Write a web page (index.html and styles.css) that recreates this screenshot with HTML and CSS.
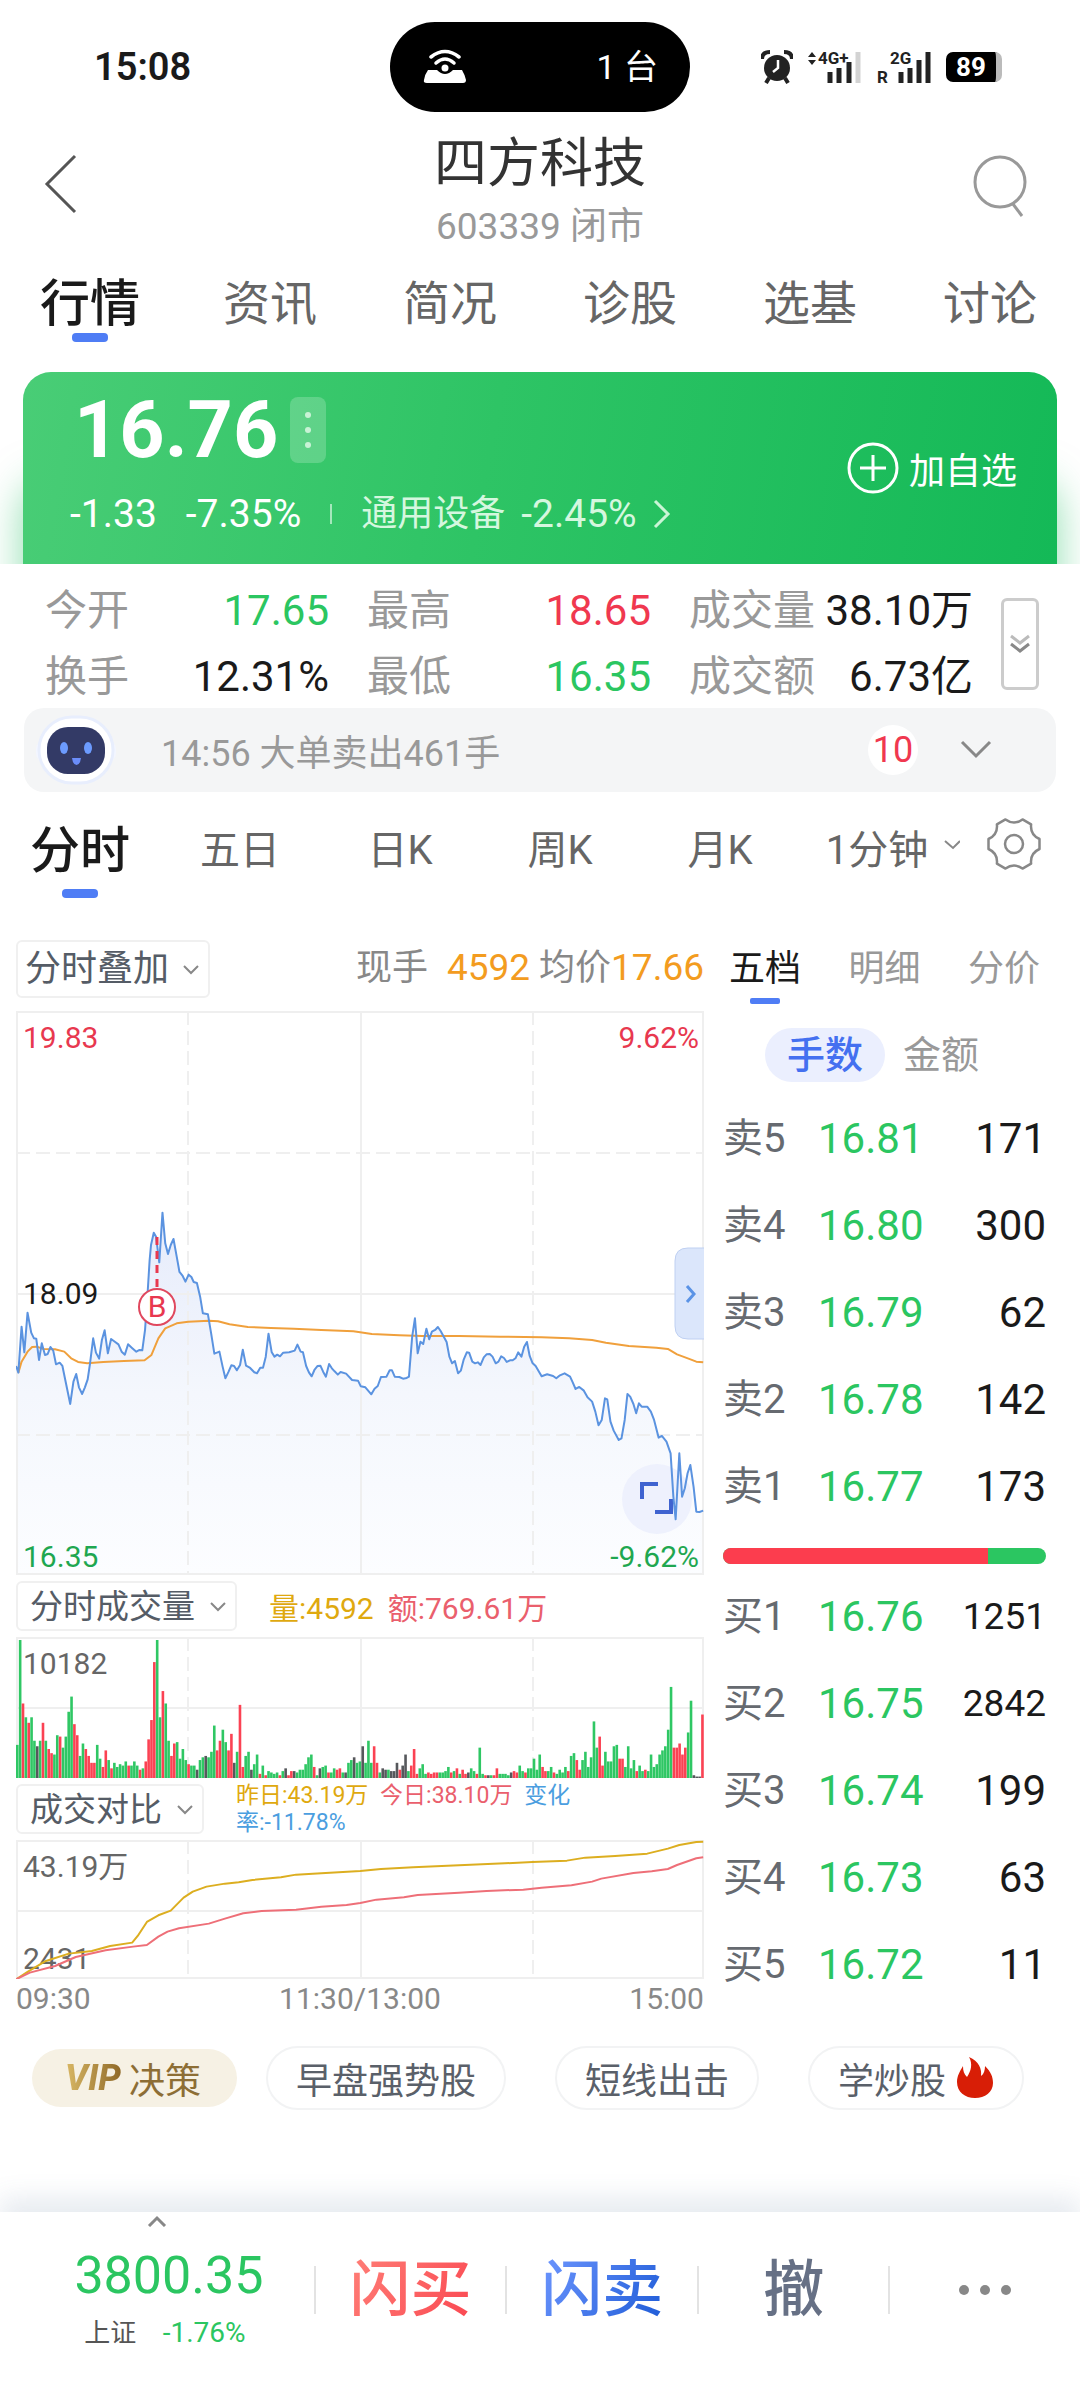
FILE: index.html
```html
<!DOCTYPE html>
<html lang="zh-CN">
<head>
  <meta charset="UTF-8">
  <meta name="viewport" content="width=device-width, initial-scale=1.0">
  <title>四方科技 603339</title>
  <link rel="stylesheet" href="styles.css">
</head>
<body>

  <!-- Phone status bar -->
  <div class="status-bar">
    <span class="clock">15:08</span>
    <div class="island">
      <svg width="46" height="36" viewBox="0 0 46 36">
        <path d="M9 8Q23-3 37 8" fill="none" stroke="#fff" stroke-width="3.5" stroke-linecap="round"/>
        <path d="M14 14Q23 6 32 14" fill="none" stroke="#fff" stroke-width="3.5" stroke-linecap="round"/>
        <path d="M6 21H15Q23 29 31 21H40Q43 26 44 31Q44 34 41 34H5Q1 34 2 31Q3 25 6 21Z" fill="#fff"/>
        <circle cx="23" cy="19" r="3.5" fill="#fff"/>
      </svg>
      <span>1 台</span>
    </div>
    <div class="indicators">
      <svg width="32" height="34" viewBox="0 0 32 34">
        <circle cx="16" cy="18" r="13" fill="#222"/>
        <path d="M1 9Q1 2 9 2M31 9Q31 2 23 2" fill="none" stroke="#222" stroke-width="4"/>
        <path d="M8 28L5 33M24 28L27 33" stroke="#222" stroke-width="4"/>
        <path d="M17 10V18L12 22" fill="none" stroke="#fff" stroke-width="2.5"/>
      </svg>
      <svg class="signal" width="54" height="34" viewBox="0 0 54 34">
        <path d="M0 7L4 2L8 7ZM0 10L4 15L8 10Z" fill="#222"/>
        <text x="10" y="14">4G+</text>
        <path d="M22 33V22M31 33V18M41 33V12" stroke="#222" stroke-width="5"/>
        <path d="M50 33V2" stroke="#d3d3d3" stroke-width="5"/>
      </svg>
      <svg class="signal" width="54" height="34" viewBox="0 0 54 34">
        <text x="0" y="33">R</text>
        <text x="13" y="14">2G</text>
        <path d="M24 33V22M33 33V18M42 33V10M51 33V2" stroke="#222" stroke-width="5"/>
      </svg>
      <span class="battery">89</span>
    </div>
  </div>

  <!-- Title bar -->
  <header class="title-bar">
    <button class="icon-button" aria-label="返回">
      <svg width="34" height="60" viewBox="0 0 34 60"><path d="M31 2L3 30L31 58" fill="none" stroke="#555" stroke-width="3"/></svg>
    </button>
    <div class="title">
      <h1>四方科技</h1>
      <p>603339 闭市</p>
    </div>
    <button class="icon-button" aria-label="搜索">
      <svg width="56" height="64" viewBox="0 0 56 64"><circle cx="28" cy="28" r="25" fill="none" stroke="#999" stroke-width="3"/><path d="M41 50L50 62" stroke="#999" stroke-width="3"/></svg>
    </button>
  </header>

  <nav class="main-tabs">
    <a href="#" class="active">行情</a>
    <a href="#">资讯</a>
    <a href="#">简况</a>
    <a href="#">诊股</a>
    <a href="#">选基</a>
    <a href="#">讨论</a>
  </nav>

  <!-- Price card -->
  <section class="price-wrap">
    <div class="price-card">
      <div class="quote">
        <div class="price-line">
          <span class="price">16.76</span>
          <button class="more-dots" aria-label="更多">
            <svg width="6" height="40" viewBox="0 0 6 40"><g fill="#c9f2d6"><circle cx="3" cy="5" r="3"/><circle cx="3" cy="20" r="3"/><circle cx="3" cy="35" r="3"/></g></svg>
          </button>
        </div>
        <div class="change-line">
          <span>-1.33</span>
          <span>-7.35%</span>
          <i class="separator"></i>
          <a href="#" class="industry">
            <span class="name">通用设备</span>
            <span>-2.45%</span>
            <svg width="18" height="30" viewBox="0 0 18 30"><path d="M2 2L15 15L2 28" fill="none" stroke="#c9f5d6" stroke-width="3"/></svg>
          </a>
        </div>
      </div>
      <button class="add-button">
        <svg width="52" height="52" viewBox="0 0 52 52"><g fill="none" stroke="#fff" stroke-width="3"><circle cx="26" cy="26" r="24"/><path d="M13 26H39M26 13V39"/></g></svg>
        加自选
      </button>
    </div>
  </section>

  <!-- Day stats -->
  <section class="stats">
    <dl>
      <div><dt>今开</dt><dd class="down">17.65</dd></div>
      <div><dt>最高</dt><dd class="up">18.65</dd></div>
      <div><dt>成交量</dt><dd>38.10万</dd></div>
      <div><dt>换手</dt><dd>12.31%</dd></div>
      <div><dt>最低</dt><dd class="down">16.35</dd></div>
      <div><dt>成交额</dt><dd>6.73亿</dd></div>
    </dl>
    <button class="expand-stats" aria-label="展开">
      <svg width="20" height="20" viewBox="0 0 20 20"><g fill="none" stroke-width="3"><path d="M1 2L10 9L19 2" stroke="#bbb"/><path d="M1 10L10 17L19 10" stroke="#888"/></g></svg>
    </button>
  </section>

  <section class="notice">
    <svg width="84" height="72" viewBox="0 0 84 72">
      <rect x="2" y="25" width="80" height="24" rx="10" fill="#f3f6ff"/>
      <rect x="5" y="3" width="74" height="66" rx="33" fill="#fff" stroke="#e8eefd" stroke-width="3"/>
      <rect x="13" y="13" width="58" height="47" rx="21" fill="#333a66"/>
      <ellipse cx="30" cy="34" rx="4" ry="6" fill="#6c9bff"/>
      <ellipse cx="54" cy="34" rx="4" ry="6" fill="#6c9bff"/>
      <path d="M38 44H47Q46 51 42.500 51Q39 51 38 44Z" fill="#6b8dfa"/>
    </svg>
    <span class="notice-text">14:56 大单卖出461手</span>
    <span class="count">10</span>
    <button class="icon-button" aria-label="展开消息">
      <svg width="32" height="20" viewBox="0 0 32 20"><path d="M2 2L16 16L30 2" fill="none" stroke="#888" stroke-width="3"/></svg>
    </button>
  </section>

  <!-- Chart period -->
  <nav class="period-tabs">
    <a href="#" class="active">分时</a>
    <a href="#">五日</a>
    <a href="#">日K</a>
    <a href="#">周K</a>
    <a href="#">月K</a>
    <a href="#" class="minutes">1分钟 <svg width="16" height="12" viewBox="0 0 16 12"><path d="M1 2L9 9L16 2" fill="none" stroke="#888" stroke-width="2"/></svg></a>
    <button class="icon-button" aria-label="设置">
      <svg width="56" height="56" viewBox="-28 -28 56 56"><g fill="none" stroke="#888" stroke-width="2.500" stroke-linejoin="round"><path d="M25.500-5V5Q16 9.200 17.100 19.600L8.500 24.600Q0 18.500-8.500 24.600L-17.100 19.600Q-16 9.200-25.500 5V-5Q-16-9.200-17.100-19.600L-8.500-24.600Q0-18.500 8.500-24.600L17.100-19.600Q16-9.200 25.500-5Z"/><circle r="9"/></g></svg>
    </button>
  </nav>

  <main class="market">
    <div class="charts">
      <div class="chart-head overlay-head">
        <label class="picker large">
          <select aria-label="分时叠加"><option>分时叠加</option></select>
          <svg width="16" height="12" viewBox="0 0 16 12"><path d="M1 2L8 9L15 2" fill="none" stroke="#888" stroke-width="2"/></svg>
        </label>
        <p class="now">现手 <b class="hand">4592</b> 均价<b>17.66</b></p>
      </div>

      <svg class="chart" viewBox="0 0 688 564">
        <defs>
          <linearGradient id="area" x1="0" y1="0" x2="0" y2="1">
            <stop offset="0" stop-color="#e6ebfb"/>
            <stop offset="0.5" stop-color="#f4f7fd"/>
            <stop offset="1" stop-color="#fcfdff"/>
          </linearGradient>
        </defs>
        <g transform="translate(-16 169) scale(0.459 0.3333)">
          <path id="price-area" fill="url(#area)"/>
        </g>
        <g class="grid">
          <rect x="1" y="1" width="686" height="562"/>
          <path d="M0 283H688M345 0V564"/>
          <path class="dashed" d="M0 142H688M0 424H688M172 0V564M517 0V564"/>
        </g>
        <circle cx="641" cy="488" r="35" fill="#eef1fd"/>
        <path d="M626 488V473H642M639 501H655V488" fill="none" stroke="#3f63d0" stroke-width="4"/>
        <g class="lines" transform="translate(-16 169) scale(0.459 0.3333)">
          <polyline id="average-line" stroke="#f0a03c"/>
          <polyline id="price-line" stroke="#5b93e0"/>
        </g>
        <path d="M141 226V277" stroke="#e8384f" stroke-width="3" stroke-dasharray="8 6"/>
        <circle cx="141" cy="296" r="18" fill="#fff" stroke="#e0485e" stroke-width="2"/>
        <text class="red" x="141" y="306" text-anchor="middle">B</text>
        <path d="M688 237H672Q659 237 659 250V315Q659 328 672 328H688" fill="#dbe6fb" stroke="#bfd0f2" stroke-width="1"/>
        <path d="M671 275L678 283L671 291" fill="none" stroke="#5a93e6" stroke-width="3"/>
        <text class="red" x="7" y="37">19.83</text>
        <text class="red" x="683" y="37" text-anchor="end">9.62%</text>
        <text class="black" x="7" y="293">18.09</text>
        <text class="green" x="7" y="556">16.35</text>
        <text class="green" x="683" y="556" text-anchor="end">-9.62%</text>
      </svg>

      <div class="chart-head">
        <label class="picker">
          <select aria-label="分时成交量"><option>分时成交量</option></select>
          <svg width="16" height="12" viewBox="0 0 16 12"><path d="M1 2L8 9L15 2" fill="none" stroke="#888" stroke-width="2"/></svg>
        </label>
        <p class="legend"><span class="gold">量:4592</span><span class="pink">额:769.61万</span></p>
      </div>

      <svg class="chart" viewBox="0 0 688 141">
        <g class="grid">
          <rect x="1" y="1" width="686" height="139"/>
          <path d="M0 71H688M345 0V141"/>
          <path class="dashed" d="M172 0V141M517 0V141"/>
        </g>
        <g id="volume-bars"></g>
        <text x="7" y="37">10182</text>
      </svg>

      <div class="chart-head">
        <label class="picker">
          <select aria-label="成交对比"><option>成交对比</option></select>
          <svg width="16" height="12" viewBox="0 0 16 12"><path d="M1 2L8 9L15 2" fill="none" stroke="#888" stroke-width="2"/></svg>
        </label>
        <p class="legend small"><span class="gold">昨日:43.19万</span>&ensp;<span class="pink">今日:38.10万</span>&ensp;<span class="blue">变化率:-11.78%</span></p>
      </div>

      <svg class="chart" viewBox="0 0 688 139">
        <g class="grid">
          <rect x="1" y="1" width="686" height="137"/>
          <path d="M0 71H688M345 0V139"/>
          <path class="dashed" d="M172 0V139M517 0V139"/>
        </g>
        <text x="7" y="37">43.19万</text>
        <text x="7" y="129">2431</text>
        <g class="lines" transform="translate(-16 -269) scale(0.459 0.3333)">
          <polyline id="yesterday-line" stroke="#dcae20"/>
          <polyline id="today-line" stroke="#ee6f78"/>
        </g>
      </svg>

      <div class="time-axis"><span>09:30</span><span>11:30/13:00</span><span>15:00</span></div>
    </div>

    <!-- Order book -->
    <aside class="book">
      <nav class="book-tabs">
        <a href="#" class="active">五档</a>
        <a href="#">明细</a>
        <a href="#">分价</a>
      </nav>
      <div class="unit-switch">
        <button class="active">手数</button>
        <button>金额</button>
      </div>
      <table>
        <tbody>
          <tr><th>卖5</th><td class="down">16.81</td><td>171</td></tr>
          <tr><th>卖4</th><td class="down">16.80</td><td>300</td></tr>
          <tr><th>卖3</th><td class="down">16.79</td><td>62</td></tr>
          <tr><th>卖2</th><td class="down">16.78</td><td>142</td></tr>
          <tr><th>卖1</th><td class="down">16.77</td><td>173</td></tr>
        </tbody>
      </table>
      <div class="ratio"><div class="ratio-buy" style="width: 82%"></div></div>
      <table>
        <tbody>
          <tr><th>买1</th><td class="down">16.76</td><td class="long">1251</td></tr>
          <tr><th>买2</th><td class="down">16.75</td><td class="long">2842</td></tr>
          <tr><th>买3</th><td class="down">16.74</td><td>199</td></tr>
          <tr><th>买4</th><td class="down">16.73</td><td>63</td></tr>
          <tr><th>买5</th><td class="down">16.72</td><td>11</td></tr>
        </tbody>
      </table>
    </aside>
  </main>

  <section class="chips">
    <a href="#" class="chip vip"><em>VIP</em> 决策</a>
    <a href="#" class="chip">早盘强势股</a>
    <a href="#" class="chip">短线出击</a>
    <a href="#" class="chip">学炒股
      <svg width="38" height="42" viewBox="0 0 38 42"><path d="M13 0C23 4 26 12 25 19C28 17 29 13 29 9C35 15 37 20 37 26C37 35 29 41 19 41C9 41 1 35 1 25C1 19 4 14 7 9C7 14 8 17 11 20C15 14 17 7 13 0Z" fill="#d81e06"/></svg>
    </a>
  </section>

  <footer class="trade-bar">
    <a href="#" class="index">
      <svg width="20" height="12" viewBox="0 0 20 12"><path d="M2 11L10 3L18 11" fill="none" stroke="#888" stroke-width="3"/></svg>
      <strong>3800.35</strong>
      <span>上证 <b>-1.76%</b></span>
    </a>
    <button class="buy"><span>闪买</span></button>
    <button class="sell"><span>闪卖</span></button>
    <button class="cancel"><span>撤</span></button>
    <button aria-label="更多操作">
      <svg width="54" height="12" viewBox="0 0 54 12"><g fill="#888"><circle cx="6" cy="6" r="5"/><circle cx="27" cy="6" r="5"/><circle cx="48" cy="6" r="5"/></g></svg>
    </button>
  </footer>

  <script src="script.js"></script>
</body>
</html>
```

FILE: styles.css
```css
* {
  box-sizing: border-box;
}

body {
  margin: 0;
  min-height: 100vh;
  display: flex;
  flex-direction: column;
  font-family: Roboto, "Noto Sans CJK SC", sans-serif;
  font-size: 36px;
  color: #1a1a1a;
  background-color: #fff;
}

h1, p, dl, dd {
  margin: 0;
}

a {
  color: inherit;
  text-decoration: none;
}

button, select {
  font: inherit;
  color: inherit;
  padding: 0;
  border: none;
  background: none;
  cursor: pointer;
}

svg {
  display: block;
  flex-shrink: 0;
}

.icon-button {
  display: flex;
}

.up {
  color: #f0384f;
}

.down {
  color: #2bc661;
}

/* Status bar */
.status-bar {
  display: grid;
  grid-template-columns: 1fr 300px 1fr;
  align-items: center;
  height: 134px;
}

.clock {
  padding-left: 94px;
  font-size: 38px;
  font-weight: 600;
}

.island {
  display: flex;
  align-items: center;
  justify-content: space-between;
  height: 90px;
  padding: 0 32px;
  border-radius: 45px;
  background-color: #000;
  color: #fff;
  font-size: 34px;
  line-height: 40px;
}

.indicators {
  display: flex;
  justify-content: flex-end;
  gap: 15px;
  padding-right: 78px;
}

.signal {
  overflow: visible;
}

.signal text {
  font-size: 17px;
  font-weight: 700;
  fill: #222;
}

.battery {
  width: 56px;
  height: 30px;
  margin-top: 2px;
  border-right: 6px solid #bbb;
  border-radius: 7px;
  background-color: #000;
  color: #fff;
  font-size: 26px;
  font-weight: 700;
  line-height: 30px;
  text-align: center;
}

/* Title */
.title-bar {
  display: flex;
  align-items: flex-start;
  justify-content: space-between;
  padding: 0 44px;
}

.title-bar .icon-button {
  width: 64px;
  padding-top: 20px;
}

.title {
  text-align: center;
}

.title h1 {
  font-size: 53px;
  font-weight: 400;
  line-height: 60px;
  color: #333;
}

.title p {
  margin-top: 12px;
  font-size: 37px;
  line-height: 42px;
  color: #999;
}

.main-tabs {
  display: grid;
  grid-template-columns: repeat(6, 1fr);
  margin-top: 27px;
}

.main-tabs a,
.period-tabs a,
.book-tabs a {
  display: flex;
  flex-direction: column;
  align-items: center;
}

.main-tabs a {
  font-size: 47px;
  line-height: 58px;
  color: #666;
}

.main-tabs a.active {
  font-size: 50px;
  font-weight: 500;
  color: #1a1a1a;
}

.main-tabs a.active::after,
.period-tabs a.active::after {
  content: "";
  width: 36px;
  height: 9px;
  border-radius: 4px;
  background-color: #4f7df5;
}

/* Price card */
.price-wrap {
  margin-top: 30px;
  padding: 0 23px;
  overflow: hidden;
}

.price-card {
  display: flex;
  align-items: center;
  justify-content: space-between;
  height: 192px;
  padding: 0 40px 0 47px;
  border-radius: 28px 28px 0 0;
  background: linear-gradient(100deg, #49cd76, #2ec465 45%, #14b957);
  box-shadow: 0 110px 40px rgba(30, 190, 95, 0.5);
  color: #fff;
}

.quote {
  align-self: flex-start;
  padding-top: 8px;
}

.price-line {
  display: flex;
  align-items: center;
  gap: 12px;
}

.price {
  padding-left: 4px;
  font-size: 79px;
  font-weight: 700;
  line-height: 100px;
}

.more-dots {
  display: flex;
  align-items: center;
  justify-content: center;
  width: 36px;
  height: 66px;
  border-radius: 8px;
  background-color: rgba(255, 255, 255, 0.2);
}

.change-line {
  display: flex;
  align-items: center;
  gap: 29px;
  margin-top: 10px;
  font-size: 39px;
  line-height: 48px;
}

.separator {
  width: 2px;
  height: 20px;
  background-color: #a5e8bc;
}

.industry {
  display: flex;
  align-items: center;
  gap: 16px;
  color: #d5f7df;
}

.industry .name {
  font-size: 36px;
}

.add-button {
  display: flex;
  align-items: center;
  gap: 10px;
}

/* Stats */
.stats {
  display: flex;
  align-items: center;
  gap: 28px;
  padding: 14px 41px 6px 45px;
}

.stats dl {
  flex: 1;
  display: grid;
  grid-template-columns: repeat(3, 1fr);
  column-gap: 38px;
  font-size: 42px;
  line-height: 66px;
}

.stats dl div {
  display: flex;
  justify-content: space-between;
  white-space: nowrap;
}

.stats dt {
  color: #999;
}

.expand-stats {
  display: flex;
  align-items: center;
  justify-content: center;
  width: 38px;
  height: 92px;
  border: 3px solid #ccc;
  border-radius: 6px;
}

.notice {
  display: flex;
  align-items: center;
  height: 84px;
  margin: -8px 24px 0;
  padding: 0 64px 0 10px;
  border-radius: 20px;
  background-color: #f4f5f6;
}

.notice-text {
  flex: 1;
  padding-left: 43px;
  color: #999;
}

.count {
  width: 50px;
  margin-right: 42px;
  border-radius: 25px;
  background-color: #fff;
  color: #f0384f;
  line-height: 50px;
  text-align: center;
}

/* Period tabs */
.period-tabs {
  display: grid;
  grid-template-columns: repeat(5, 160fr) 186fr 94fr;
  align-items: start;
  height: 104px;
  margin-top: 21px;
}

.period-tabs a {
  font-size: 40px;
  line-height: 76px;
  color: #666;
}

.period-tabs .minutes {
  flex-direction: row;
  justify-content: center;
  gap: 16px;
}

.minutes svg {
  margin-bottom: 12px;
}

.period-tabs a.active {
  font-size: 50px;
  font-weight: 500;
  color: #1a1a1a;
}

.period-tabs .icon-button {
  padding-top: 3px;
}

/* Charts */
.market {
  display: grid;
  grid-template-columns: 688fr 323fr;
  column-gap: 19px;
  padding: 23px 34px 0 16px;
}

.chart {
  width: 100%;
  height: auto;
}

.chart text {
  font-size: 30px;
  fill: #666;
}

.chart text.red {
  fill: #e8384f;
}

.chart text.green {
  fill: #1fa750;
}

.chart text.black {
  fill: #1a1a1a;
}

.grid {
  fill: none;
  stroke: #efefef;
  stroke-width: 2;
}

.grid .dashed {
  stroke-dasharray: 14 6;
}

.lines polyline {
  fill: none;
  stroke-width: 2;
  stroke-linejoin: round;
  vector-effect: non-scaling-stroke;
}

.chart-head {
  display: flex;
  align-items: center;
  height: 62px;
}

.overlay-head {
  justify-content: space-between;
  align-items: flex-start;
  height: 71px;
}

.picker {
  position: relative;
  color: #555c66;
}

.picker select {
  display: block;
  height: 50px;
  padding: 0 40px 0 12px;
  border: 2px solid #f0f0f0;
  border-radius: 6px;
  appearance: none;
  font-size: 33px;
}

.picker.large select {
  height: 58px;
  padding: 0 38px 0 7px;
  font-size: 36px;
}

.picker svg {
  position: absolute;
  top: 50%;
  right: 11px;
  margin-top: -5px;
  pointer-events: none;
}

.now {
  line-height: 56px;
  color: #888;
}

.now b {
  font-size: 37px;
  font-weight: 400;
  color: #f39c1f;
}

.now .hand {
  margin-left: 10px;
}

.legend {
  display: flex;
  gap: 14px;
  margin-left: 32px;
  font-size: 30px;
}

.legend.small {
  display: block;
  width: 355px;
  font-size: 23px;
  line-height: 27px;
}

.gold {
  color: #dfa90f;
}

.pink {
  color: #ea5f6d;
}

.blue {
  color: #4b9ee0;
}

.time-axis {
  display: flex;
  justify-content: space-between;
  font-size: 30px;
  line-height: 40px;
  color: #888;
}

/* Order book */
.book-tabs {
  display: flex;
  justify-content: space-between;
  height: 66px;
  padding: 0 6px;
}

.book-tabs a {
  line-height: 58px;
  color: #999;
}

.book-tabs a.active {
  color: #1a1a1a;
}

.book-tabs a.active::after {
  content: "";
  width: 30px;
  height: 6px;
  border-radius: 2px;
  background-color: #4f7df5;
}

.unit-switch {
  display: flex;
  gap: 18px;
  margin: 22px 0 13px 42px;
  font-size: 38px;
  line-height: 54px;
  color: #999;
}

.unit-switch .active {
  padding: 0 22px;
  border-radius: 27px;
  background-color: #ebeffe;
  color: #4470f0;
  font-weight: 500;
}

.book table {
  width: 100%;
  border-collapse: collapse;
  font-size: 42px;
  line-height: 50px;
}

.book tr {
  height: 87px;
}

.book th,
.book td {
  padding: 0;
  font-weight: 400;
  text-align: left;
}

.book th {
  width: 95px;
  font-size: 40px;
  color: #666a70;
}

.book td:last-child {
  text-align: right;
}

.book td.long {
  font-size: 37px;
}

.ratio {
  height: 16px;
  margin: 18px 0 9px;
  border-radius: 8px;
  overflow: hidden;
  background-color: #2bc661;
}

.ratio-buy {
  height: 100%;
  background-color: #fc3d4e;
}

/* Shortcut chips */
.chips {
  display: flex;
  align-items: center;
  gap: 29px;
  margin-top: 27px;
  padding: 0 32px;
}

.chip {
  display: flex;
  align-items: center;
  gap: 10px;
  height: 64px;
  padding: 0 28px;
  border: 2px solid #f2f3f4;
  border-radius: 32px;
  color: #5a6069;
  white-space: nowrap;
}

.chip + .chip + .chip {
  margin-left: 20px;
}

.chip.vip {
  gap: 4px;
  height: 58px;
  padding: 0 36px 0 33px;
  border: none;
  background-color: #f6f1e4;
  color: #8d6e35;
}

.vip em {
  padding-right: 4px;
  font-weight: 800;
  background: linear-gradient(90deg, #d9b865, #8a6424);
  background-clip: text;
  -webkit-text-fill-color: transparent;
}

/* Trade bar */
.trade-bar {
  display: grid;
  grid-template-columns: 313fr repeat(4, 191fr);
  height: 180px;
  margin-top: auto;
  background-color: #fff;
  box-shadow: 0 -14px 24px rgba(70, 100, 140, 0.13);
}

.trade-bar .index {
  display: flex;
  flex-direction: column;
  align-items: center;
  padding-top: 3px;
}

.index strong {
  margin-top: 16px;
  padding-left: 24px;
  font-size: 52px;
  font-weight: 400;
  line-height: 66px;
  color: #2bc661;
}

.index span {
  padding-left: 16px;
  font-size: 26px;
  line-height: 48px;
  color: #555;
}

.index b {
  margin-left: 20px;
  font-size: 28px;
  font-weight: 400;
  color: #2bc661;
}

.trade-bar button {
  display: flex;
  align-items: center;
  justify-content: center;
  height: 48px;
  margin-top: 54px;
  border-left: 2px solid #e3e3e3;
  font-size: 61px;
  font-weight: 500;
}

.trade-bar button span {
  line-height: 80px;
}

.buy span,
.sell span {
  background: linear-gradient(120deg, #ff8078, #fa4650);
  background-clip: text;
  -webkit-text-fill-color: transparent;
}

.sell span {
  background-image: linear-gradient(120deg, #6f97ff, #1c5ad6);
}

.cancel span {
  color: #667085;
}
```

FILE: script.js
```js
// Intraday price, one "x,y" pair per sample
const price = '35,558 40,578 47,440 53,517 60,398 68,458 74,475 79,476 85,540 91,490 98,525 104,522 110,501 116,512 122,553 130,548 136,558 141,592 153,672 160,605 166,582 172,622 179,642 185,622 191,598 196,552 203,475 209,518 216,536 222,480 228,451 235,520 242,477 248,483 258,493 265,515 272,524 279,493 287,503 297,515 304,510 310,511 316,450 322,330 326,240 329,195 335,158 340,170 347,247 354,98 360,190 366,222 372,195 378,177 385,230 391,276 398,288 404,305 411,284 417,291 422,306 429,309 436,350 442,400 453,403 460,460 467,521 478,515 485,560 491,595 498,575 504,556 510,558 516,571 523,555 529,509 536,557 545,564 554,577 560,580 567,563 573,563 579,530 585,461 592,517 598,530 604,524 610,529 617,518 630,517 642,512 648,494 655,515 660,517 667,558 673,577 679,589 685,570 692,558 698,557 704,575 710,590 717,552 723,565 729,574 736,584 742,576 754,581 767,600 780,602 786,619 796,622 809,643 816,626 823,618 830,591 842,590 849,571 854,571 860,590 870,591 878,596 886,594 891,590 898,470 904,415 910,520 916,485 922,492 929,446 935,478 941,455 948,450 954,441 960,453 973,486 979,530 985,550 991,543 998,580 1004,572 1010,540 1017,517 1022,518 1029,545 1035,550 1041,547 1047,555 1054,532 1060,523 1067,522 1073,530 1080,550 1086,545 1092,529 1098,534 1104,546 1111,541 1117,541 1123,535 1129,517 1136,530 1142,500 1148,486 1154,528 1160,549 1167,558 1173,572 1180,589 1192,583 1205,588 1212,595 1220,586 1230,580 1242,590 1248,608 1254,627 1262,621 1272,632 1280,652 1290,665 1297,695 1304,736 1311,720 1318,655 1323,658 1330,725 1337,752 1348,780 1354,775 1361,720 1367,642 1373,650 1380,672 1386,700 1392,670 1398,680 1410,680 1418,695 1425,720 1435,773 1442,768 1452,785 1461,820 1467,950 1472,1018 1480,820 1486,950 1492,925 1498,880 1504,855 1511,920 1517,995 1524,996 1532,992';

const average = '40,578 47,545 60,515 70,501 80,500 95,507 120,508 140,515 155,535 170,546 190,550 225,546 270,543 315,541 330,525 345,475 360,445 385,430 410,425 455,422 475,424 500,433 540,441 590,444 640,446 700,450 770,454 810,462 870,466 920,468 1000,468 1090,470 1180,472 1240,475 1290,480 1320,488 1370,498 1430,503 1455,507 1475,523 1500,536 1517,545 1532,547';

const yesterday = '35,1225 60,1203 100,1170 150,1148 200,1140 240,1125 288,1115 300,1095 320,1053 345,1033 372,1019 400,980 420,962 450,947 490,938 520,934 550,927 612,919 645,911 700,907 785,900 830,894 900,889 1000,883 1100,877 1160,873 1235,869 1275,860 1340,855 1410,848 1455,833 1480,822 1517,813 1532,812';

const today = '35,1225 65,1205 120,1185 165,1158 230,1138 290,1127 320,1122 345,1097 365,1082 390,1072 455,1058 490,1043 530,1027 570,1020 645,1016 700,1007 755,1002 785,996 820,986 880,979 910,972 1000,965 1060,960 1140,956 1180,950 1245,943 1290,932 1310,923 1380,906 1420,901 1455,894 1475,882 1517,862 1532,859';

// Volume per minute: g = down, r = up, k = flat, then percent of the peak
const volume = 'g24 g100 r54 g44 r40 g44 g27 k23 g27 r40 g27 r21 r18 g17 g31 r30 g22 g30 g48 g59 r39 r31 g16 g25 r21 r16 r11 r11 g24 g14 r8 r20 g13 r7 g11 g8 g10 g9 g12 r9 g9 g12 g9 r6 g7 r12 r28 r42 r84 g100 g44 r63 g54 g27 r16 r25 g26 g14 g21 g13 r10 g9 g9 k6 g13 g15 k16 g15 g19 g38 r20 r27 g35 g26 r20 r32 k11 g19 r53 r8 g16 g19 k6 g10 g17 r3 g9 r2 g5 g4 g3 g4 r2 g5 k7 r2 r5 k5 g4 g6 g6 g10 g15 g17 r8 g2 k7 g8 g9 r4 g4 g7 r6 r7 g4 k4 g11 g13 k15 g11 g12 k23 g11 g27 g11 r23 r11 g4 k7 k6 g6 k5 k5 k11 r6 k9 k17 g5 r9 r21 r3 g7 g10 g3 r4 r3 r4 r4 g4 g4 g5 g8 r4 g5 r7 g3 r6 r3 k4 g7 g5 r3 g22 g3 r2 k2 g2 r2 r7 g3 g3 g3 g2 k4 r5 r4 g9 g5 r4 g7 g7 g14 g6 g17 r8 r5 g5 g8 r4 g3 g6 g4 g8 r5 g16 g18 r13 r6 g13 g19 g8 g15 g41 g22 r30 r9 g19 g12 g12 g23 g24 r14 r14 g8 g23 g7 g13 r5 g9 g5 r6 g5 g17 g8 g10 g17 g20 g23 g35 g66 r22 r22 r25 r17 r22 g33 g56 k2 k1 k1 r46';

const colors = { g: '#2fc764', r: '#fb4253', k: '#56585c' };

document.getElementById('price-line').setAttribute('points', price);
document.getElementById('average-line').setAttribute('points', average);
document.getElementById('yesterday-line').setAttribute('points', yesterday);
document.getElementById('today-line').setAttribute('points', today);
document.getElementById('price-area').setAttribute('d', 'M' + price + ' L1532,1185 L35,1185 Z');

const bars = volume.split(' ');
const step = 688 / bars.length;
document.getElementById('volume-bars').innerHTML = bars.map((bar, i) => {
  const height = parseInt(bar.slice(1)) * 1.38;
  return `<rect x="${i * step}" y="${141 - height}" width="2.6" height="${height}" fill="${colors[bar[0]]}"/>`;
}).join('');
```
